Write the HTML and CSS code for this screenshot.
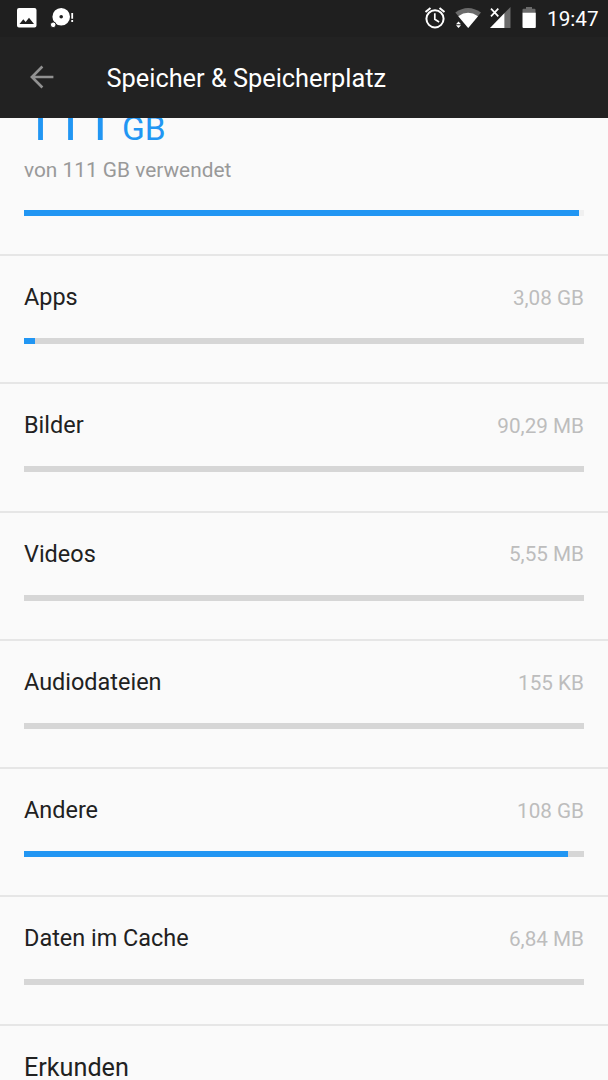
FILE: index.html
```html
<!DOCTYPE html>
<html lang="de">
<head>
<meta charset="utf-8">
<title>Speicher &amp; Speicherplatz</title>
<link rel="stylesheet" href="styles.css">
</head>
<body>
<div class="statusbar">
  <svg class="notifications" width="80" height="37" viewBox="0 0 80 37">
    <path fill="#fff" fill-rule="evenodd" d="M19 8h15.500q2 0 2 2v15.500q0 2-2 2H19q-2 0-2-2V10q0-2 2-2zM19.500 24h14.500l-5-6.200-3.300 4.300-2.400-2.900z"/>
    <path fill="#fff" fill-rule="evenodd" d="M61.200 8a8.800 8.800 0 1 1 0 17.600a8.800 8.800 0 1 1 0-17.600zM61.200 15a1.800 1.800 0 1 0 0 3.600a1.800 1.800 0 1 0 0-3.600z"/>
    <circle cx="53.200" cy="24.800" r="2.800" fill="#fff" stroke="#202020" stroke-width="1"/>
    <path d="M72.200 13v5.800M72.200 20v2" stroke="#fff" stroke-width="1.800"/>
  </svg>
  <svg class="system" width="120" height="37" viewBox="420 0 120 37">
    <g fill="none" stroke="#fff" stroke-width="2">
      <circle cx="435" cy="18.800" r="8.600"/>
      <path d="M425.500 12l5-4M444.500 12l-5-4"/>
      <path d="M434.800 13.300v6l4.300 2.700" stroke-width="1.700"/>
    </g>
    <path fill="#6b6b6b" d="M455.300 12.500Q468 3.500 481 12.500L468.200 28z"/>
    <path fill="#fff" d="M458.300 16.200Q468 9.500 478 16.200L468.200 28z"/>
    <path fill="#fff" d="M456 24.200l2.500-2.700 2.500 2.700zM456 25.200l2.500 2.700 2.500-2.700z"/>
    <path fill="#6b6b6b" d="M510.500 7v21h-6V13z"/>
    <path fill="#fff" d="M490 28l14.500-15v15z"/>
    <path stroke="#fff" stroke-width="1.700" d="M491 8.700l7.300 7.700M498.300 8.700l-7.300 7.700"/>
    <path fill="#6b6b6b" d="M522.500 13V9.700q0-1 1-1h2.500V7h6v1.700h2.500q1 0 1 1V13z"/>
    <path fill="#fff" d="M522.500 12.700h13.300v14.300q0 1-1 1h-11.300q-1 0-1-1z"/>
  </svg>
  <span class="clock">19:47</span>
</div>
<header class="toolbar">
  <svg class="back" width="26" height="26" viewBox="0 0 26 26"><path fill="none" stroke="#919191" stroke-width="2.600" d="M24.400 12H2.500M13.400 1.500L2.900 12l10.500 10.500"/></svg>
  <h1 class="title">Speicher &amp; Speicherplatz</h1>
</header>
<main class="content">
  <section class="summary">
    <div class="total">111<span class="unit"> GB</span></div>
    <div class="used">von 111 GB verwendet</div>
    <div class="bar bar-total"><div class="fill" style="width:99.1%"></div></div>
  </section>
  <section class="row"><div class="line"><span class="label">Apps</span><span class="value">3,08 GB</span></div><div class="bar"><div class="fill" style="width:2%"></div></div></section>
  <section class="row"><div class="line"><span class="label">Bilder</span><span class="value">90,29 MB</span></div><div class="bar"></div></section>
  <section class="row"><div class="line"><span class="label">Videos</span><span class="value">5,55 MB</span></div><div class="bar"></div></section>
  <section class="row"><div class="line"><span class="label">Audiodateien</span><span class="value">155 KB</span></div><div class="bar"></div></section>
  <section class="row"><div class="line"><span class="label">Andere</span><span class="value">108 GB</span></div><div class="bar"><div class="fill" style="width:97.100%"></div></div></section>
  <section class="row"><div class="line"><span class="label">Daten im Cache</span><span class="value">6,84 MB</span></div><div class="bar"></div></section>
  <section class="row"><div class="line"><span class="label label-link">Erkunden</span></div></section>
</main>
</body>
</html>
```
FILE: styles.css
```css
* { box-sizing: border-box; }
body {
  margin: 0;
  width: 608px;
  height: 1080px;
  display: flex;
  flex-direction: column;
  overflow: hidden;
  background: #fafafa;
  font-family: Roboto, sans-serif;
}
.statusbar {
  flex: none;
  height: 37px;
  display: flex;
  align-items: center;
  background: #1f1f1f;
  color: #fff;
}
.system { margin-left: auto; }
.clock {
  width: 68px;
  padding: 1px 0 0 7px;
  font-size: 20.700px;
  line-height: 37px;
}
.toolbar {
  flex: none;
  height: 81px;
  display: flex;
  align-items: center;
  padding-left: 29px;
  background: #222;
}
.back { margin-right: 51.500px; }
.title {
  margin: 0;
  color: #fff;
  font-size: 25.350px;
  font-weight: 400;
  line-height: 30px;
}
.content {
  flex: 1;
  min-height: 0;
  overflow: hidden;
}
.summary {
  display: flow-root;
  height: 136px;
  padding: 0 24px;
}
.total {
  height: 60px;
  margin-top: -22px;
  color: #2196f3;
  font-size: 53.200px;
  line-height: 52px;
}
.unit { font-size: 33.500px; }
.used {
  color: #999;
  font-size: 20.850px;
  line-height: 28px;
}
.bar {
  height: 6px;
  background: #d6d6d6;
}
.bar-total {
  margin-top: 26px;
  background: #f0f0f0;
}
.fill {
  height: 6px;
  background: #2196f3;
}
.row {
  height: 128.250px;
  padding: 25px 24px 0;
  border-top: 2px solid #e6e6e6;
}
.line {
  height: 32px;
  margin-bottom: 25px;
  display: flex;
  align-items: center;
  justify-content: space-between;
}
.label {
  color: #212121;
  font-size: 23.450px;
}
.label-link {
  padding-top: 2px;
  font-size: 25.200px;
}
.value {
  padding-top: 1.500px;
  color: #bdbdbd;
  font-size: 20.700px;
}
```
